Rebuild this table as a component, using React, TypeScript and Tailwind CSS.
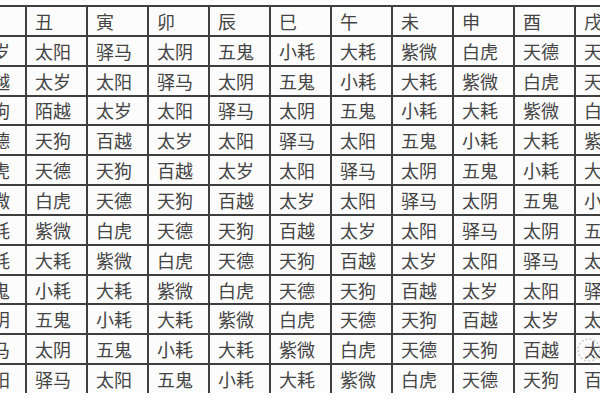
import React from "react";

const STARS = ["太岁", "太阳", "驿马", "太阴", "五鬼", "小耗", "大耗", "紫微", "白虎", "天德", "天狗", "百越"];
const BRANCHES = ["子", "丑", "寅", "卯", "辰", "巳", "午", "未", "申", "酉", "戌"];

// the source table has a few copy slips; keep them as printed
const OVERRIDES: Record<string, string> = {
  "2-1": "陌越",
  "3-6": "太阳",
  "11-2": "太阳",
};

const cellText = (row: number, col: number) =>
  OVERRIDES[`${row}-${col}`] ?? STARS[(col - row + 24) % 12];

const Cell: React.FC<{ children: React.ReactNode }> = ({ children }) => (
  <div className="flex items-center bg-[#fcfcfc] pl-[8px] text-[18px] leading-none text-[#444]">
    {children}
  </div>
);

export default function App() {
  return (
    <div
      className="relative h-[400px] w-[600px] overflow-hidden bg-white"
      style={{ fontFamily: '"Noto Sans CJK SC", "Noto Sans", sans-serif' }}
    >
      <div className="ml-[-34px] mt-[-22.85px] grid w-max grid-cols-[repeat(11,59px)] grid-rows-[repeat(14,27.85px)] gap-[2px] bg-[#3f3f3f]">
        <div className="col-span-11 bg-white" />
        {BRANCHES.map((b) => (
          <Cell key={b}>{b}</Cell>
        ))}
        {Array.from({ length: 12 }, (_, r) =>
          BRANCHES.map((_, c) => <Cell key={`${r}-${c}`}>{cellText(r, c)}</Cell>)
        )}
      </div>

      <svg className="absolute left-[574px] top-[334px]" width="30" height="32" viewBox="0 0 30 32">
        <circle cx="15" cy="16" r="11" fill="none" stroke="#c9c9c9" strokeWidth="1.5" strokeDasharray="2 2" />
        <circle cx="15" cy="16" r="6" fill="none" stroke="#d6d6d6" strokeWidth="1" strokeDasharray="1 2" />
      </svg>
    </div>
  );
}
